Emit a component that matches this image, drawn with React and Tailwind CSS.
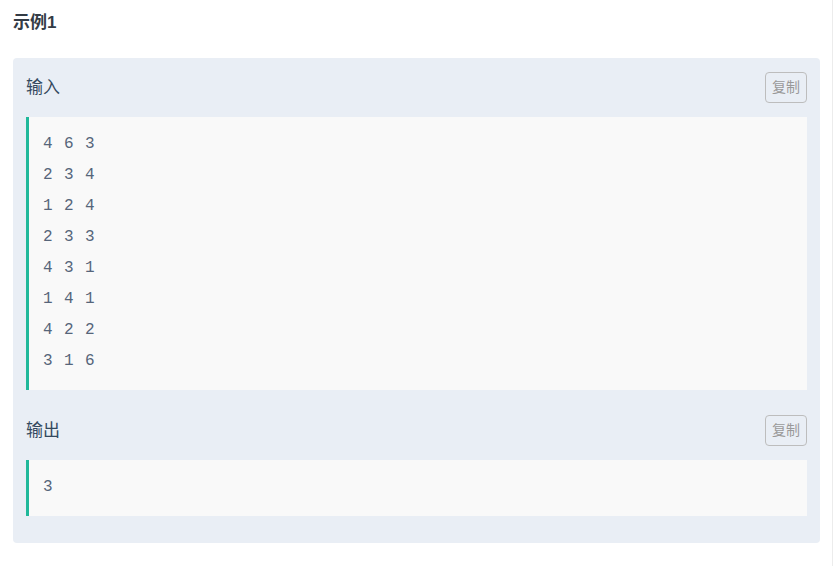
import React from "react";

const inputLines = ["4 6 3", "2 3 4", "1 2 4", "2 3 3", "4 3 1", "1 4 1", "4 2 2", "3 1 6"];
const outputLines = ["3"];

const cjk = { fontFamily: '"Liberation Sans", "Noto Sans CJK SC", sans-serif' };
const mono = { fontFamily: '"Liberation Mono", "Courier New", monospace' };

const Section = ({ title, lines, first }) => {
  return (
    <div className={first ? "" : "mt-[11px]"}>
      {/* header */}
      <div className="flex items-center justify-between pt-[14px] pb-[14px]">
        <span className="text-[17px] text-[#34495e]" style={cjk}>
          {title}
        </span>
        <button
          className="h-[31px] px-[6px] border border-[#bdbdbd] rounded-[4px] text-[14px] text-[#999] bg-transparent"
          style={cjk}
        >
          复制
        </button>
      </div>

      {/* code */}
      <div className="bg-[#f9f9f9] border-l-[3px] border-[#1fb89a] pl-[14px] pt-[12px] pb-[13px]">
        {lines.map((line, i) => (
          <div
            key={i}
            className="h-[31px] leading-[31px] text-[16px] font-light tracking-[0.9px] text-[#56657a] whitespace-pre"
            style={mono}
          >
            {line}
          </div>
        ))}
      </div>
    </div>
  );
};

const App = () => {
  return (
    <div className="min-h-screen bg-white flex">
      <div className="w-[833px] border-r border-[#ececec] pl-[13px] pr-[12px]">
        <h3 className="pt-[13px] text-[17px] font-bold text-[#333b45] leading-[20px]" style={cjk}>
          示例1
        </h3>

        <div className="mt-[25px] bg-[#e9eef5] rounded-[4px] px-[13px] pb-[27px]">
          <Section title="输入" lines={inputLines} first />
          <Section title="输出" lines={outputLines} />
        </div>
      </div>
    </div>
  );
};

export default App;
